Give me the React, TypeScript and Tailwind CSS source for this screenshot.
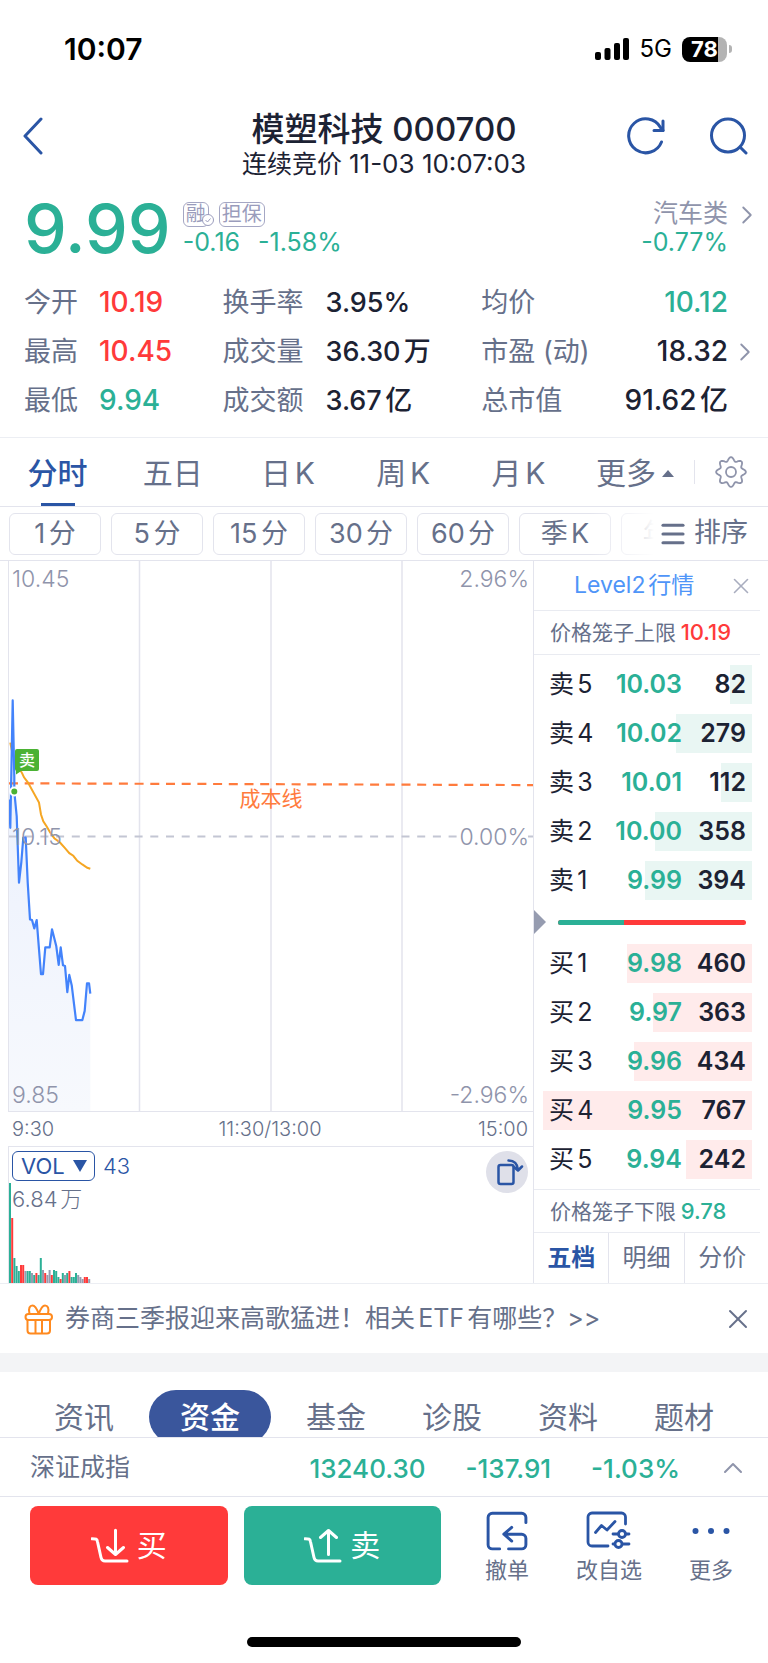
import { Menu, X, ChevronRight, ChevronUp } from 'lucide-react';

type Level = { name: string; price: string; qty: number };

const periods = ['分时', '五日', '日K', '周K', '月K'];
const minutes = ['1分', '5分', '15分', '30分', '60分', '季K', '年K'];

const openStats = [
  { label: '今开', value: '10.19', color: 'text-[#ff3a3a]' },
  { label: '最高', value: '10.45', color: 'text-[#ff3a3a]' },
  { label: '最低', value: '9.94', color: 'text-[#2bb096]' },
];
const volumeStats = [
  { label: '换手率', value: '3.95%', color: 'text-[#1c2233]' },
  { label: '成交量', value: '36.30万', color: 'text-[#1c2233]' },
  { label: '成交额', value: '3.67亿', color: 'text-[#1c2233]' },
];
const valueStats = [
  { label: '均价', value: '10.12', color: 'text-[#2bb096]' },
  { label: '市盈 (动)', value: '18.32', color: 'text-[#1c2233]', more: true },
  { label: '总市值', value: '91.62亿', color: 'text-[#1c2233]' },
];

const asks: Level[] = [
  { name: '卖5', price: '10.03', qty: 82 },
  { name: '卖4', price: '10.02', qty: 279 },
  { name: '卖3', price: '10.01', qty: 112 },
  { name: '卖2', price: '10.00', qty: 358 },
  { name: '卖1', price: '9.99', qty: 394 },
];
const bids: Level[] = [
  { name: '买1', price: '9.98', qty: 460 },
  { name: '买2', price: '9.97', qty: 363 },
  { name: '买3', price: '9.96', qty: 434 },
  { name: '买4', price: '9.95', qty: 767 },
  { name: '买5', price: '9.94', qty: 242 },
];
const maxQty = Math.max(...asks.concat(bids).map((l) => l.qty));

const priceLine =
  '0,239 1.3,267.3 3.7,139.7 5.3,216 5.3,231 7.7,255.7 10,322.3 12.3,302 14.3,277 16.7,277 18.7,322 21,359 23,359.7 25.3,368 27.7,359.7 30,389 32,414 34,414 36.3,387 40.7,387 43,369 47.3,386 49.7,404.7 51.7,387 54,405 56,405.7 58.3,432 60.3,414.7 62.7,425 67,460 73.3,460 75.7,450.7 78,423 80,423 81.3,433.3';
const avgLine =
  '1.3,182 2.7,189 6,200 13.3,213 15,216.7 19,222 30,242 32,254 34.3,260.7 37.7,266 41,271.7 45.3,277.7 51,282 56,287.7 60.3,292.7 64.3,295.3 68.3,300.3 73.3,304 78.3,307.3 81.3,308.3';

const UP = '#ff3a3a';
const DOWN = '#2bb096';
const FLAT = '#969cb0';
const volumes: [number, string][] = [
  [100, DOWN], [65, UP], [25, DOWN], [17, DOWN], [12, DOWN], [18, UP], [18, UP], [12, FLAT],
  [12, DOWN], [12, DOWN], [10, FLAT], [8, DOWN], [10, UP], [8, DOWN], [25, DOWN], [13, FLAT],
  [10, UP], [8, FLAT], [13, FLAT], [8, UP], [13, DOWN], [12, DOWN], [6, DOWN], [4, UP],
  [10, DOWN], [8, FLAT], [10, DOWN], [12, UP], [6, DOWN], [6, DOWN], [10, DOWN], [8, FLAT],
  [6, FLAT], [4, FLAT], [6, UP], [6, UP], [4, FLAT],
];

// eight round teeth around the centre
const gearPoints = Array.from({ length: 96 }, (_, i) => {
  const a = (i / 96) * Math.PI * 2;
  const r = 13 + 1.9 * Math.cos(8 * a);
  return `${(16 + r * Math.cos(a)).toFixed(2)},${(16 + r * Math.sin(a)).toFixed(2)}`;
}).join(' ');

const StatusBar = () => (
  <div className="flex h-[98px] items-center justify-between pl-16 pr-9 text-black">
    <span className="text-[30px] leading-9 font-semibold">10:07</span>
    <div className="flex items-center">
      <svg width="35" height="22" viewBox="0 0 35 22" className="mr-2.5">
        <rect x="0" y="14" width="6" height="8" rx="2" />
        <rect x="9.5" y="10" width="6" height="12" rx="2" />
        <rect x="19" y="5" width="6" height="17" rx="2" />
        <rect x="28" y="0" width="6" height="22" rx="2" />
      </svg>
      <span className="mr-2.5 text-2xl">5G</span>
      <div className="flex items-center gap-0.5">
        <div className="flex h-[25px] w-[45px] items-center justify-center rounded-lg bg-linear-to-r from-black from-80% to-[#b3b3b3] to-80% text-[22px] leading-none font-bold text-white">
          78
        </div>
        <div className="h-2 w-[3px] rounded-r-full bg-[#b3b3b3]" />
      </div>
    </div>
  </div>
);

const Header = () => (
  <header className="flex items-start justify-between px-5 pt-[13px] text-[#2a55a5]">
    <div className="flex flex-1">
      <button aria-label="返回" className="flex h-[50px] items-center">
        <svg width="26" height="38" viewBox="0 0 26 38" fill="none" stroke="currentColor" strokeWidth="3" strokeLinecap="round" strokeLinejoin="round">
          <path d="M21 2 5 19l16 17" />
        </svg>
      </button>
    </div>
    <div className="text-center text-[#1c2233]">
      <h1 className="text-[33px] leading-9 font-medium">模塑科技 000700</h1>
      <p className="text-[25px] leading-[34px]">
        连续竞价 <span className="text-[26px]">11-03 10:07:03</span>
      </p>
    </div>
    <div className="flex flex-1 justify-end gap-[42px]">
      <button aria-label="刷新" className="flex h-[50px] items-center">
        <svg width="40" height="40" viewBox="0 0 40 40" fill="none" stroke="currentColor" strokeWidth="3" strokeLinecap="round" strokeLinejoin="round">
          <path d="M35.500 26a17 17 0 1 1-1-14.500L37 14.500" />
          <path d="M37 5v9.500h-9" />
        </svg>
      </button>
      <button aria-label="搜索" className="flex h-[50px] items-center">
        <svg width="40" height="40" viewBox="0 0 40 40" fill="none" stroke="currentColor" strokeWidth="3" strokeLinecap="round">
          <circle cx="20" cy="19.500" r="16.500" />
          <path d="m32.500 31.500 5.500 5.500" />
        </svg>
      </button>
    </div>
  </header>
);

const Quote = () => (
  <section className="flex items-start justify-between pt-[11px] pr-3.5 pl-6">
    <div className="flex">
      <div className="text-[68px] leading-[72px] font-medium text-[#2bb096]">9.99</div>
      <div className="mt-2.5 ml-3">
        <div className="flex gap-2.5 text-xl leading-[23px] text-[#9a9cbc]">
          <span className="relative w-[26px] rounded-md border border-[#a5a7c4] text-center">
            融
            <svg width="12" height="12" viewBox="0 0 12 12" className="absolute -right-1.5 bottom-0" fill="white" stroke="#9a9cbc" strokeWidth="1">
              <circle cx="6" cy="6" r="5.500" />
              <path d="m3.500 6 2 2 3-3.500" fill="none" />
            </svg>
          </span>
          <span className="rounded-md border border-[#a5a7c4] px-0.5">担保</span>
        </div>
        <div className="flex gap-[18px] text-[25px] leading-[30px] text-[#2bb096]">
          <span>-0.16</span>
          <span>-1.58%</span>
        </div>
      </div>
    </div>
    <a href="#sector" className="mt-2 flex items-start gap-1">
      <span className="text-right text-[25px]">
        <span className="block leading-[27px] text-[#8f94ab]">汽车类</span>
        <span className="block leading-[30px] text-[#2bb096]">-0.77%</span>
      </span>
      <ChevronRight size={30} strokeWidth={1.5} className="-mr-2 text-[#8f94ab]" />
    </a>
  </section>
);

const Stats = () => (
  <section className="mt-[14px] grid grid-cols-[198fr_258fr_246fr] border-b border-[#eceef3] pr-10 pb-3 pl-6 text-[27px] leading-[49px]">
    <dl>
      {openStats.map((s) => (
        <div key={s.label} className="flex">
          <dt className="w-[75px] text-[#66708a]">{s.label}</dt>
          <dd className={`text-[28px] font-medium ${s.color}`}>{s.value}</dd>
        </div>
      ))}
    </dl>
    <dl>
      {volumeStats.map((s) => (
        <div key={s.label} className="flex">
          <dt className="w-[103px] text-[#66708a]">{s.label}</dt>
          <dd className={`font-medium ${s.color}`}>{s.value}</dd>
        </div>
      ))}
    </dl>
    <dl>
      {valueStats.map((s) => (
        <div key={s.label} className="relative flex justify-between">
          <dt className="text-[#66708a]">{s.label}</dt>
          <dd className={`text-[28px] font-medium ${s.color}`}>{s.value}</dd>
          {s.more && (
            <ChevronRight size={30} strokeWidth={1.5} className="absolute top-2.5 -right-8 text-[#8f94ab]" />
          )}
        </div>
      ))}
    </dl>
  </section>
);

const PeriodTabs = () => (
  <nav className="flex h-[69px] border-b border-[#e3e4ed] text-[30px] text-[#66708a]">
    {periods.map((p, i) => (
      <button
        key={p}
        className={
          i === 0
            ? 'relative flex-1 pt-0.5 font-medium text-[#2a55a5] after:absolute after:bottom-0 after:left-1/2 after:h-[3px] after:w-[34px] after:-translate-x-1/2 after:bg-[#2a55a5]'
            : 'flex-1 pt-0.5'
        }
      >
        {p}
      </button>
    ))}
    <div className="flex w-[192px] items-center justify-between pr-[21px] pl-5">
      <button className="flex items-center gap-1.5 pt-0.5">
        更多
        <svg width="12" height="7" viewBox="0 0 12 7" fill="currentColor">
          <path d="M6 0 12 7H0z" />
        </svg>
      </button>
      <span className="h-6 w-px bg-[#e3e4ed]" />
      <button aria-label="设置">
        <svg width="32" height="32" viewBox="0 0 32 32" fill="none" stroke="#8f94ab" strokeWidth="1.800" strokeLinejoin="round">
          <polygon points={gearPoints} />
          <circle cx="16" cy="16" r="5" />
        </svg>
      </button>
    </div>
  </nav>
);

const MinuteTabs = () => (
  <div className="flex h-[54px] items-center border-b border-[#e3e4ed] text-[27px] text-[#66708a]">
    <div className="relative flex flex-1 gap-2.5 overflow-hidden pl-[9px]">
      {minutes.map((m) => (
        <button key={m} className="h-[42px] w-[92px] shrink-0 rounded-md border border-[#e3e4ed] leading-9">
          {m}
        </button>
      ))}
      <div className="absolute inset-y-0 right-0 w-16 bg-linear-to-r from-transparent to-white" />
    </div>
    <button className="flex shrink-0 items-center gap-1.5 pr-5 pl-2">
      <Menu size={30} strokeWidth={2.5} className="-ml-1" />
      排序
    </button>
  </div>
);

const PriceChart = () => (
  <div className="relative h-[551px] border-b border-l border-[#e3e4ed] text-[23px] leading-7 font-light text-[#8f94ab]">
    <svg className="absolute inset-0 h-full w-full" viewBox="0 0 524 551" preserveAspectRatio="none" fill="none">
      <defs>
        <linearGradient id="area" x1="0" y1="0" x2="0" y2="1">
          <stop offset="0" stopColor="#e9effd" />
          <stop offset="1" stopColor="#f7f9fd" />
        </linearGradient>
      </defs>
      <polygon points={`0,551 ${priceLine} 81.3,551`} fill="url(#area)" />
      <path d="M130.500 0v551M262 0v551M393 0v551" stroke="#e3e4ed" strokeWidth="1.500" />
      <path d="M0 276H450M519 276h5" stroke="#c3c6d3" strokeWidth="2" strokeDasharray="8 7.700" />
      <path d="M0 222.700 524 224.500" stroke="#ff7b3d" strokeWidth="2.200" strokeDasharray="9 6.700" />
      <polyline points={avgLine} stroke="#f5a623" strokeWidth="2" />
      <polyline points={priceLine} stroke="#4383fb" strokeWidth="2.200" strokeLinejoin="round" />
      <circle cx="5.300" cy="231" r="4" fill="#4bb234" stroke="white" strokeWidth="2" />
      <path d="M7 208v6l6-4z" fill="#4bb234" />
    </svg>
    <span className="absolute top-[188px] left-1.5 h-[22px] w-6 rounded-xs bg-[#4bb234] text-center text-base leading-[22px] font-medium text-white">
      卖
    </span>
    <span className="absolute top-[224px] left-1/2 -translate-x-1/2 text-[21px] font-normal text-[#ff7b3d]">成本线</span>
    <span className="absolute top-1 left-[3px]">10.45</span>
    <span className="absolute top-1 right-1">2.96%</span>
    <span className="absolute top-[262px] left-[3px]">10.15</span>
    <span className="absolute top-[262px] right-1">0.00%</span>
    <span className="absolute bottom-0.5 left-[3px]">9.85</span>
    <span className="absolute right-1 bottom-0.5">-2.96%</span>
  </div>
);

const VolumeChart = () => (
  <div className="relative h-[137px] border-t border-l border-[#e3e4ed] pt-1 pl-[3px]">
    <div className="flex items-center gap-2 text-[22px] text-[#2a55a5]">
      <label className="relative">
        <span className="sr-only">指标</span>
        <select className="block h-[30px] w-[83px] appearance-none rounded-md border border-[#2a55a5] py-0 pl-2 text-[22px] leading-7">
          <option>VOL</option>
          <option>MACD</option>
          <option>KDJ</option>
        </select>
        <svg width="14" height="12" viewBox="0 0 14 12" fill="currentColor" className="pointer-events-none absolute top-[9px] right-2">
          <path d="M0 0h14L7 12z" />
        </svg>
      </label>
      <span className="leading-7 font-light">43</span>
    </div>
    <svg className="absolute bottom-0 left-0 h-[101px] w-full" viewBox="0 0 524 101" preserveAspectRatio="none">
      {volumes.map(([h, color], i) => (
        <rect key={i} x={i * 2.2} y={101 - h} width="2" height={h} fill={color} />
      ))}
    </svg>
    <p className="relative mt-0.5 text-[22px] leading-8 font-light text-[#66708a]">6.84万</p>
    <button aria-label="横屏" className="absolute top-1 right-[5px] size-[42px] rounded-full bg-[#dfe0e9] text-[#2a55a5]">
      <svg width="42" height="42" viewBox="0 0 42 42" fill="none" stroke="currentColor" strokeWidth="2.500" strokeLinecap="round" strokeLinejoin="round">
        <rect x="12.500" y="14" width="15" height="19" rx="2" />
        <path d="M22.500 9.500c6 0 9 3.500 9.500 9.500M28 16l4 3.500 4-4" />
      </svg>
    </button>
  </div>
);

const LevelTable = ({ levels, tint, label }: { levels: Level[]; tint: string; label: string }) => (
  <table aria-label={label} className="w-full border-separate border-spacing-x-0 border-spacing-y-[10px] text-[25px] leading-none text-[#1c2233]">
    <tbody>
      {levels.map((l) => {
        const pct = (l.qty / maxQty) * 100;
        return (
          <tr key={l.name} className="h-[39px]" style={{ background: `linear-gradient(to left, ${tint} ${pct}%, transparent ${pct}%)` }}>
            <th scope="row" className="p-0 pl-1.5 text-left font-normal">{l.name}</th>
            <td className="p-0 text-right font-semibold text-[#2bb096]">{l.price}</td>
            <td className="w-[70px] p-0 pr-1.5 text-right font-semibold">{l.qty}</td>
          </tr>
        );
      })}
    </tbody>
  </table>
);

const OrderBook = () => (
  <aside className="flex w-[235px] shrink-0 flex-col border-l border-[#e3e4ed] pr-2 text-[#66708a]">
    <div className="flex h-[50px] items-center justify-between border-b border-[#e9ebf1] pr-1.5 pl-10">
      <a href="#level2" className="text-[23px] text-[#4f95f8]">Level2行情</a>
      <button aria-label="关闭行情">
        <X size={26} strokeWidth={1.5} className="text-[#a9adbf]" />
      </button>
    </div>
    <p className="h-11 border-b border-[#e9ebf1] pl-4 text-[21px] leading-[42px]">
      价格笼子上限<span className="ml-0.5 text-[22px] font-medium text-[#ff3a3a]">10.19</span>
    </p>
    <div className="pr-2 pl-[9px]">
      <LevelTable levels={asks} tint="#e9f6f3" label="卖盘" />
    </div>
    <div className="flex h-6 items-center pr-3.5">
      <svg width="12" height="24" viewBox="0 0 12 24" fill="#969cb0">
        <path d="M0 0 12 12 0 24z" />
      </svg>
      <div className="ml-3 flex h-[5px] flex-1 overflow-hidden rounded-full bg-[#ff3a3a]">
        <div className="w-[35%] bg-[#2bb096]" />
      </div>
    </div>
    <div className="pr-2 pl-[9px]">
      <LevelTable levels={bids} tint="#ffebeb" label="买盘" />
    </div>
    <p className="h-11 border-y border-[#e9ebf1] pl-4 text-[21px] leading-[42px]">
      价格笼子下限<span className="ml-0.5 text-[22px] font-medium text-[#2bb096]">9.78</span>
    </p>
    <div className="grid flex-1 grid-cols-3 divide-x divide-[#e3e4ed] text-2xl">
      <button className="font-bold text-[#2a55a5]">五档</button>
      <button>明细</button>
      <button>分价</button>
    </div>
  </aside>
);

const Notice = () => (
  <div className="flex h-[70px] items-center border-t border-[#eceef3] pr-3.5 pl-6 text-[#66708a]">
    <svg width="30" height="32" viewBox="0 0 30 32" fill="none" stroke="#ff8a1f" strokeWidth="2" strokeLinejoin="round" className="mr-[11px]">
      <rect x="1.500" y="11" width="26.500" height="6" rx="3" />
      <path d="M3.500 17v10.500a3 3 0 0 0 3 3H23a3 3 0 0 0 3-3V17M11.500 17v13.500M18 17v13.500" />
      <path d="M5.500 11C4 5 6 2.500 8.500 2.500S13 6 14.750 11C16.500 6 18.500 2.500 21 2.500S25.500 5 24 11" />
    </svg>
    <a href="#news" className="flex-1 text-[25px]">券商三季报迎来高歌猛进！相关ETF有哪些？&gt;&gt;</a>
    <button aria-label="关闭">
      <X size={32} strokeWidth={1.5} />
    </button>
  </div>
);

const InfoTabs = () => (
  <nav className="flex h-[65px] items-start justify-center overflow-hidden pt-[18px] text-[30px] leading-[54px] text-[#66708a]">
    <button className="px-7">资讯</button>
    <button className="mx-[7px] shrink-0 rounded-full bg-[#3a569c] px-[31px] font-medium text-white">资金</button>
    <button className="px-7">基金</button>
    <button className="px-7">诊股</button>
    <button className="px-7">资料</button>
    <button className="px-7">题材</button>
  </nav>
);

const IndexRow = () => (
  <div className="flex h-[60px] items-center border-y border-[#e3e4ed] pt-0.5 pr-[19px] pl-[30px] text-[25px]">
    <span className="flex-1 text-[#66708a]">深证成指</span>
    <div className="flex gap-10 text-[26px] font-medium text-[#2bb096]">
      <span>13240.30</span>
      <span>-137.91</span>
      <span>-1.03%</span>
    </div>
    <button aria-label="展开指数" className="ml-[37px]">
      <ChevronUp size={32} strokeWidth={1.5} className="text-[#8f94ab]" />
    </button>
  </div>
);

const ActionBar = () => (
  <div className="flex pt-[9px] pr-1.5 pl-[30px] text-[22px] text-[#66708a]">
    <div className="flex flex-1 gap-4 text-[30px] text-white">
      <button className="flex h-[79px] flex-1 items-center justify-center gap-2 rounded-lg bg-[#ff3a3a]">
        <svg width="38" height="36" viewBox="-1 -1 38 36" fill="none" stroke="currentColor" strokeWidth="3" strokeLinecap="round" strokeLinejoin="round">
          <path d="M0 9.700c4 0 5 .3 5.500 3L9 28.500c.6 2.500 1.500 3.500 4 3.500h22M23.500 1.300v24M15.500 18.500l8 7 8-7" />
        </svg>
        买
      </button>
      <button className="flex h-[79px] flex-1 items-center justify-center gap-2 rounded-lg bg-[#2bb096]">
        <svg width="38" height="36" viewBox="-1 -1 38 36" fill="none" stroke="currentColor" strokeWidth="3" strokeLinecap="round" strokeLinejoin="round">
          <path d="M0 9.700c4 0 5 .3 5.500 3L9 28.500c.6 2.500 1.500 3.500 4 3.500h22M23.500 25.500v-24M15.500 8.500l8-7 8 7" />
        </svg>
        卖
      </button>
    </div>
    <div className="ml-[15px] grid w-[306px] grid-cols-3 leading-8">
      <button className="flex flex-col items-center">
        <svg width="42" height="48" viewBox="0 0 40 44" fill="none" stroke="#2a55a5" strokeWidth="2.800" strokeLinecap="round" strokeLinejoin="round">
          <path d="M38 15V10a4 4 0 0 0-4-4H6a4 4 0 0 0-4 4v26a4 4 0 0 0 4 4h7M21.500 40H34a4 4 0 0 0 4-4v-6a4 4 0 0 0-4-4H17M24.500 19.500 17 26l7.500 6.500" />
        </svg>
        撤单
      </button>
      <button className="flex flex-col items-center">
        <svg width="46" height="48" viewBox="0 0 46 48" fill="none" stroke="#2a55a5" strokeWidth="2.800" strokeLinecap="round" strokeLinejoin="round">
          <path d="M39.500 18V11a4 4 0 0 0-4-4H6a4 4 0 0 0-4 4v25a4 4 0 0 0 4 4h16M9.500 26.500l6-7 5.500 4.500 8-8.500M27 28h5M40 28h3M27 38h1.500M36.500 38H43" />
          <circle cx="36" cy="28" r="3.500" />
          <circle cx="32.500" cy="38" r="3.500" />
        </svg>
        改自选
      </button>
      <button className="flex flex-col items-center">
        <svg width="42" height="48" viewBox="0 0 42 48" fill="#2a55a5">
          <circle cx="5.500" cy="25" r="3" />
          <circle cx="21" cy="25" r="3" />
          <circle cx="36.500" cy="25" r="3" />
        </svg>
        更多
      </button>
    </div>
  </div>
);

const App: React.FC = () => {
  return (
    <div className="min-h-screen bg-white font-['Inter','Noto_Sans_CJK_SC',sans-serif] [text-autospace:normal]">
      <StatusBar />
      <Header />
      <Quote />
      <Stats />
      <PeriodTabs />
      <MinuteTabs />
      <main className="flex">
        <div className="min-w-0 flex-1 pl-2">
          <PriceChart />
          <div className="grid h-[34px] grid-cols-3 items-center pr-[5px] pl-1 text-xl font-light text-[#66708a]">
            <span>9:30</span>
            <span className="text-center">11:30/13:00</span>
            <span className="text-right">15:00</span>
          </div>
          <VolumeChart />
        </div>
        <OrderBook />
      </main>
      <Notice />
      <div className="h-[19px] bg-[#f3f4f6]" />
      <InfoTabs />
      <IndexRow />
      <ActionBar />
      <div className="flex justify-center pt-[51px] pb-4">
        <div className="h-2.5 w-[274px] rounded-full bg-black" />
      </div>
    </div>
  );
};

export default App;
